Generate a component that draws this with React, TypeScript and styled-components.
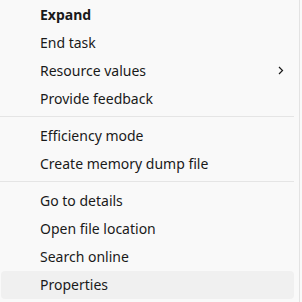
import React from "react";
import styled, { createGlobalStyle } from "styled-components";

const GlobalStyle = createGlobalStyle`
  html, body {
    margin: 0;
    padding: 0;
    background: #f9f9f9;
  }
`;

type Entry =
  | { kind: "item"; label: string; bold?: boolean; submenu?: boolean; active?: boolean }
  | { kind: "sep" };

const entries: Entry[] = [
  { kind: "item", label: "Expand", bold: true },
  { kind: "item", label: "End task" },
  { kind: "item", label: "Resource values", submenu: true },
  { kind: "item", label: "Provide feedback" },
  { kind: "sep" },
  { kind: "item", label: "Efficiency mode" },
  { kind: "item", label: "Create memory dump file" },
  { kind: "sep" },
  { kind: "item", label: "Go to details" },
  { kind: "item", label: "Open file location" },
  { kind: "item", label: "Search online" },
  { kind: "item", label: "Properties", active: true },
];

const App = () => {
  return (
    <>
      <GlobalStyle />
      <S.Menu>
        {entries.map((e, i) =>
          e.kind === "sep" ? (
            <S.Separator key={i} />
          ) : (
            <S.Item key={i} $active={e.active}>
              <S.Label $bold={e.bold}>{e.label}</S.Label>
              {e.submenu && (
                <S.Chevron width="6" height="9" viewBox="0 0 6 9">
                  <path d="M1 1l3.5 3.5L1 8" fill="none" stroke="#1a1a1a" strokeWidth="1.2" />
                </S.Chevron>
              )}
            </S.Item>
          )
        )}
      </S.Menu>
    </>
  );
};

export default App;

const S = {
  Menu: styled.div`
    width: 300px;
    height: 302px;
    box-sizing: border-box;
    padding: 1px 5px 0 0;
    background: #f9f9f9;
    border-right: 1px solid #e3e3e3;
    display: flex;
    flex-direction: column;
    font-family: "Segoe UI", "Noto Sans", sans-serif;
  `,
  Item: styled.div<{ $active?: boolean }>`
    height: 28px;
    box-sizing: border-box;
    flex-shrink: 0;
    margin-left: 1px;
    padding: 0 10px 2px 39px;
    display: flex;
    align-items: center;
    justify-content: space-between;
    border-radius: 4px;
    background: ${(p) => (p.$active ? "#f0f0f0" : "transparent")};
  `,
  Label: styled.span<{ $bold?: boolean }>`
    font-size: 14px;
    color: #1a1a1a;
    font-weight: ${(p) => (p.$bold ? 700 : 400)};
  `,
  Chevron: styled.svg`
    display: block;
  `,
  Separator: styled.div`
    height: 1px;
    flex-shrink: 0;
    margin: 3px 0 5px;
    background: #e5e5e5;
  `,
};
